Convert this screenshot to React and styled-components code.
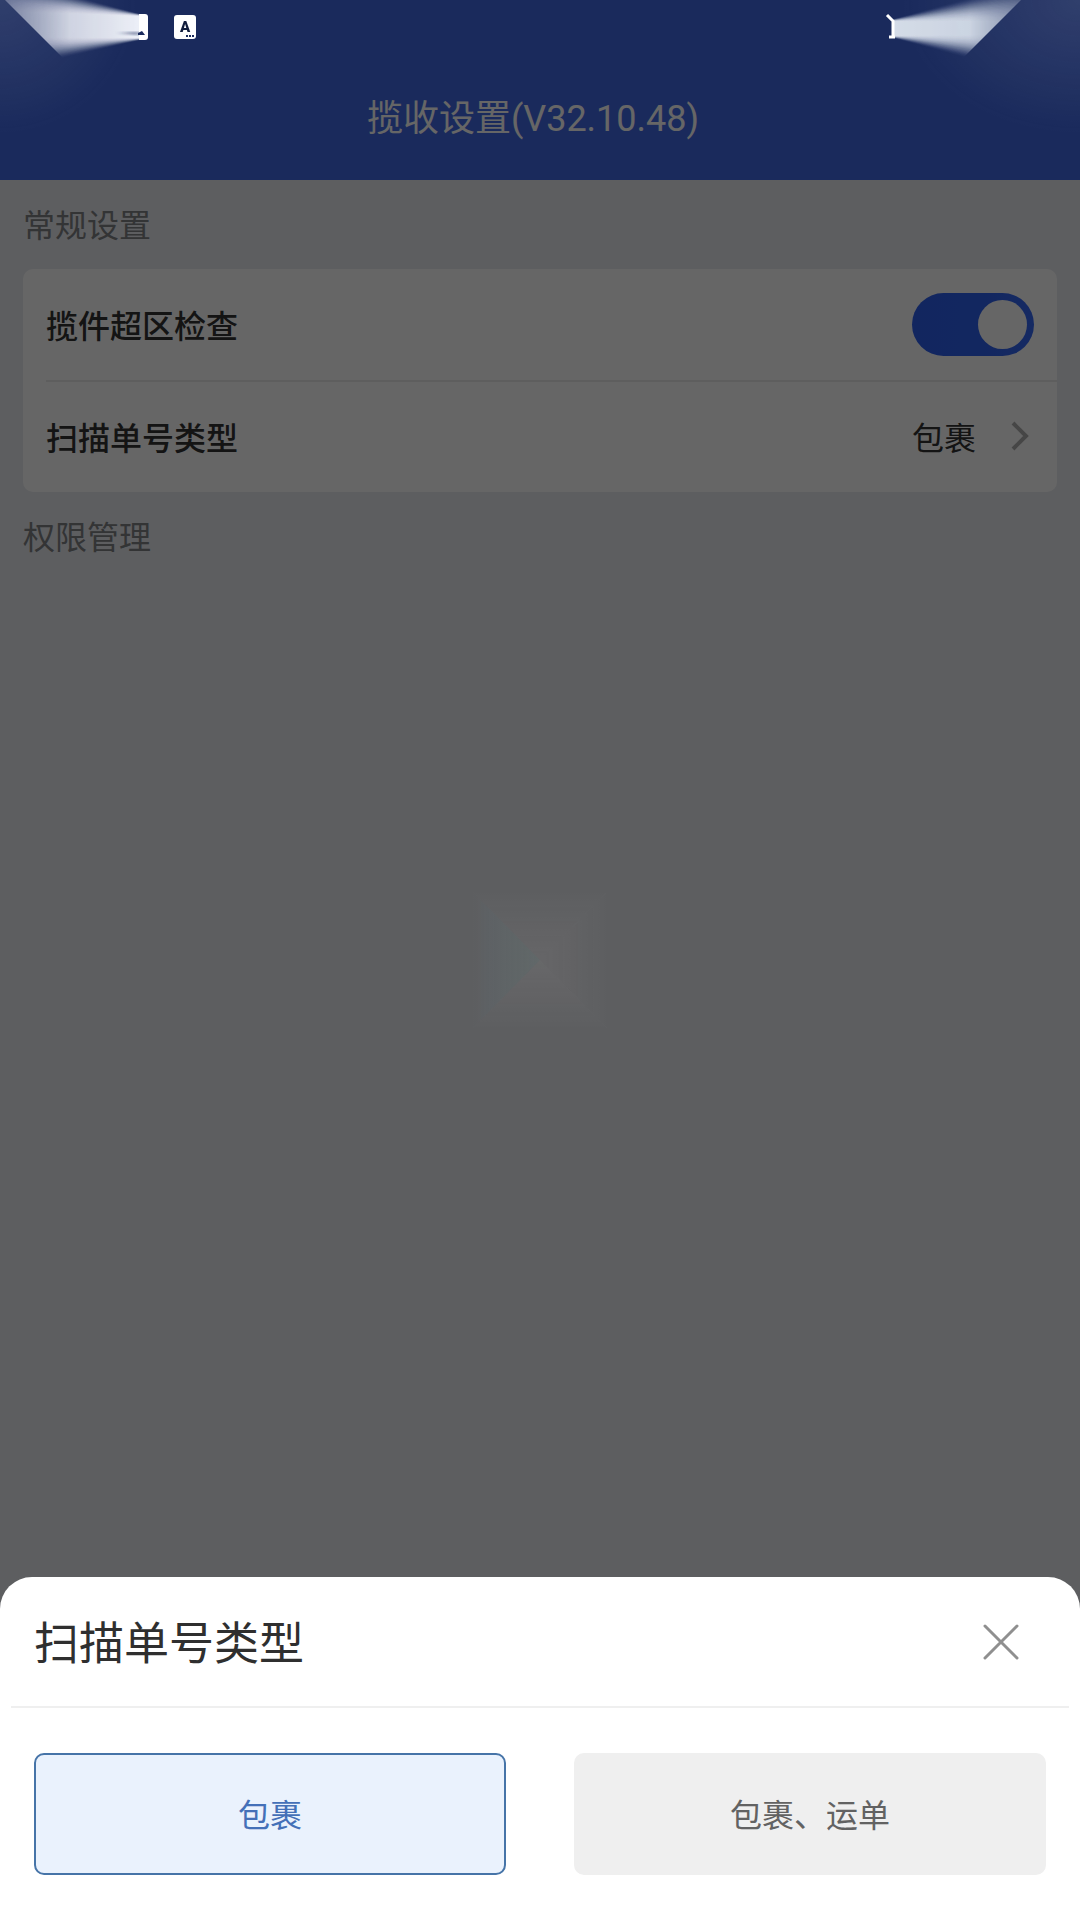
import React, { useState } from 'react'
import styled, { createGlobalStyle } from 'styled-components'

const GlobalStyle = createGlobalStyle`
  * {
    box-sizing: border-box;
  }
  body {
    margin: 0;
    background: #e9ebf0;
    font-family: Roboto, "Noto Sans CJK SC", sans-serif;
  }
  button, input {
    margin: 0;
    font-family: inherit;
  }
`

const Page = styled.div`
  min-height: 100vh;
`
const Header = styled.header`
  display: flex;
  justify-content: center;
  height: 180px;
  padding: 56px 14px 0 0;
  background: #4169e6;
`
const PageTitle = styled.h1`
  margin: 0;
  font-size: 36px;
  font-weight: 400;
  line-height: 126px;
  height: 124px;
  color: #fff;
`
const Settings = styled.main`
  padding: 0 23px;
`
const SectionTitle = styled.h2`
  margin: 0;
  height: 89px;
  font-size: 32px;
  font-weight: 400;
  line-height: 92px;
  color: #808285;
`
const Card = styled.section`
  padding-left: 23px;
  border-radius: 10px;
  background: #fff;
`
const SettingRow = styled.div`
  display: flex;
  align-items: center;
  justify-content: space-between;
  height: 111px;
  padding-right: 23px;

  & + & {
    height: 112px;
    border-top: 2px solid #ebebeb;
  }
`
const RowLabel = styled.label`
  padding-bottom: 2px;
  font-size: 32px;
  font-weight: 500;
  color: #333;
`
const RowValue = styled.button`
  display: flex;
  align-items: center;
  gap: 28px;
  padding: 0 0 2px;
  border: none;
  background: none;
  font-size: 32px;
  color: #333;
`
const Toggle = styled.input`
  appearance: none;
  display: flex;
  align-items: center;
  width: 122px;
  height: 63px;
  padding: 0 7px;
  border-radius: 32px;
  background: ${props => props.checked ? 'linear-gradient(90deg, #2d5fee, #2f62f0 60%, #3669f5)' : '#ccc'};
  justify-content: ${props => props.checked ? 'flex-end' : 'flex-start'};

  &::before {
    content: '';
    width: 49px;
    height: 49px;
    border-radius: 50%;
    background: #fff;
  }
`
const Backdrop = styled.div`
  position: fixed;
  inset: 0;
  display: grid;
  place-items: center;
  background: rgba(0, 0, 0, 0.6);
`
const StatusBar = styled.div`
  position: fixed;
  top: 0;
  left: 0;
  right: 0;
  display: flex;
  justify-content: space-between;
`
const Sheet = styled.section`
  position: fixed;
  left: 0;
  right: 0;
  bottom: 0;
  border-radius: 32px 32px 0 0;
  background: #fff;
`
const SheetHeader = styled.div`
  display: flex;
  align-items: center;
  justify-content: space-between;
  height: 131px;
  margin: 0 11px;
  padding: 0 50px 0 23px;
  border-bottom: 2px solid #efefef;
`
const SheetTitle = styled.h2`
  margin: 0;
  padding-bottom: 2px;
  font-size: 45px;
  font-weight: 400;
  color: #2f2f2f;
`
const CloseButton = styled.button`
  display: flex;
  padding: 0;
  border: none;
  background: none;
`
const Options = styled.div`
  display: grid;
  grid-template-columns: 1fr 1fr;
  gap: 68px;
  padding: 45px 34px;
`
const OptionButton = styled.button`
  height: 122px;
  padding: 0 0 2px;
  border: 2px solid ${props => props.$active ? '#4674a8' : '#efefef'};
  border-radius: 10px;
  background: ${props => props.$active ? '#eaf2fd' : '#efefef'};
  font-size: 32px;
  color: ${props => props.$active ? '#4470b8' : '#626262'};
`

const scanTypes = ['包裹', '包裹、运单']
const rays = Array.from({ length: 24 }, (_, i) => i)

function LeftStatus() {
  return (
    <svg width="220" height="140" viewBox="0 0 220 140" aria-hidden="true">
      <defs>
        <radialGradient id="leftTint" cx="0" cy="0" r="1">
          <stop offset="0" stopColor="#fff" stopOpacity="0.1" />
          <stop offset="1" stopColor="#fff" stopOpacity="0" />
        </radialGradient>
        <linearGradient id="leftFade" gradientUnits="userSpaceOnUse" x1="0" y1="0" x2="140" y2="0">
          <stop offset="0" stopColor="#fff" stopOpacity="0.35" />
          <stop offset="0.5" stopColor="#fff" stopOpacity="0.85" />
          <stop offset="1" stopColor="#fff" />
        </linearGradient>
        <mask id="leftMask">
          <path d="M5 0H141V62H67Z" fill="url(#leftFade)" />
        </mask>
        <filter id="soft">
          <feGaussianBlur stdDeviation="3 1" />
        </filter>
      </defs>
      <rect width="138" height="135" fill="url(#leftTint)" />
      <g mask="url(#leftMask)">
        {rays.map(i => (
          <path
            key={i}
            d={`M141 ${14 + i * 0.1}V${40 - i * 0.1}L0 ${72 - i * 1.5}V${-24 + i * 1.5}Z`}
            fill="#f8fafd"
            opacity={0.02 + i * 0.009}
          />
        ))}
      </g>
      <path d="M118 33L140 32V35Z" fill="#1a2a5c" opacity="0.6" filter="url(#soft)" />
      <path d="M139 14H145Q148 14 148 17V37Q148 40 145 40H139Z" fill="#fff" />
      <path d="M138 33L142 31L145 35H138Z" fill="#1a2a5c" />
      <rect x="174" y="15" width="22" height="24" rx="3" fill="#fff" />
      <text x="185" y="32" textAnchor="middle" fontSize="15" fontWeight="900" fill="#101c3c">A</text>
      <path d="M186 36h2m1 0h2m1 0h2" stroke="#1a2a5c" strokeWidth="2" />
    </svg>
  )
}

function RightStatus() {
  return (
    <svg width="200" height="140" viewBox="0 0 200 140" aria-hidden="true">
      <defs>
        <radialGradient id="rightTint" cx="1" cy="0" r="1">
          <stop offset="0" stopColor="#fff" stopOpacity="0.1" />
          <stop offset="1" stopColor="#fff" stopOpacity="0" />
        </radialGradient>
        <linearGradient id="rightFade" gradientUnits="userSpaceOnUse" x1="13" y1="0" x2="141" y2="0">
          <stop offset="0" stopColor="#fff" stopOpacity="0.95" />
          <stop offset="0.6" stopColor="#fff" stopOpacity="0.9" />
          <stop offset="1" stopColor="#fff" stopOpacity="0.5" />
        </linearGradient>
        <mask id="rightMask">
          <path d="M13 0H141L80 61H13Z" fill="url(#rightFade)" />
        </mask>
      </defs>
      <rect x="20" width="180" height="135" fill="url(#rightTint)" />
      <g mask="url(#rightMask)">
        {rays.map(i => (
          <path
            key={i}
            d={`M13 ${19 + i * 0.1}V${38 - i * 0.1}L141 ${72 - i * 1.6}V${-16 + i * 1.6}Z`}
            fill="#e9eff7"
            opacity={0.02 + i * 0.009}
          />
        ))}
      </g>
      <path d="M7 15L13 21V37M9 37H15" fill="none" stroke="#fff" strokeWidth="3" />
    </svg>
  )
}

// faint loading tile in the middle of the page, four sides fading outwards
function LoadingTile() {
  return (
    <svg width="134" height="136" viewBox="0 0 134 136" aria-hidden="true">
      <defs>
        <linearGradient id="tileTop" x1="0" y1="1" x2="0" y2="0">
          <stop offset="0" stopColor="#fff" stopOpacity="0.05" />
          <stop offset="1" stopColor="#fff" stopOpacity="0.005" />
        </linearGradient>
        <linearGradient id="tileBottom" x1="0" y1="0" x2="0" y2="1">
          <stop offset="0" stopColor="#fff" stopOpacity="0.06" />
          <stop offset="1" stopColor="#fff" stopOpacity="0.005" />
        </linearGradient>
        <linearGradient id="tileRight">
          <stop offset="0" stopColor="#fff" stopOpacity="0.05" />
          <stop offset="1" stopColor="#fff" stopOpacity="0.005" />
        </linearGradient>
        <linearGradient id="tileLeft">
          <stop offset="0" stopColor="#607880" stopOpacity="0" />
          <stop offset="0.3" stopColor="#607880" stopOpacity="0.16" />
          <stop offset="1" stopColor="#708884" stopOpacity="0.24" />
        </linearGradient>
      </defs>
      <path d="M0 0H134L67 68Z" fill="url(#tileTop)" />
      <path d="M0 136H134L67 68Z" fill="url(#tileBottom)" />
      <path d="M134 0V136L67 68Z" fill="url(#tileRight)" />
      <path d="M0 0L67 68L0 136Z" fill="url(#tileLeft)" />
    </svg>
  )
}

function App() {
  const [checkArea, setCheckArea] = useState(true)
  const [scanType, setScanType] = useState(scanTypes[0])
  const [open, setOpen] = useState(true)

  return (
    <Page>
      <GlobalStyle />
      <Header>
        <PageTitle>揽收设置(V32.10.48)</PageTitle>
      </Header>
      <Settings>
        <SectionTitle>常规设置</SectionTitle>
        <Card>
          <SettingRow>
            <RowLabel htmlFor="check-area">揽件超区检查</RowLabel>
            <Toggle
              id="check-area"
              type="checkbox"
              checked={checkArea}
              onChange={e => setCheckArea(e.target.checked)}
            />
          </SettingRow>
          <SettingRow>
            <RowLabel htmlFor="scan-type">扫描单号类型</RowLabel>
            <RowValue id="scan-type" type="button" onClick={() => setOpen(true)}>
              {scanType}
              <svg width="30" height="32" viewBox="0 0 30 32" aria-hidden="true">
                <path d="M9 3L22 16L9 29" fill="none" stroke="#b0b0b0" strokeWidth="4" />
              </svg>
            </RowValue>
          </SettingRow>
        </Card>
        <SectionTitle>权限管理</SectionTitle>
      </Settings>

      {open && (
        <>
          <Backdrop>
            <LoadingTile />
          </Backdrop>
          <Sheet role="dialog" aria-labelledby="sheet-title">
            <SheetHeader>
              <SheetTitle id="sheet-title">扫描单号类型</SheetTitle>
              <CloseButton type="button" aria-label="关闭" onClick={() => setOpen(false)}>
                <svg width="36" height="36" viewBox="0 0 36 36" aria-hidden="true">
                  <path d="M2 2L34 34M34 2L2 34" stroke="#8f8f8f" strokeWidth="3" strokeLinecap="round" />
                </svg>
              </CloseButton>
            </SheetHeader>
            <Options>
              {scanTypes.map(type => (
                <OptionButton
                  key={type}
                  type="button"
                  $active={type === scanType}
                  onClick={() => setScanType(type)}
                >
                  {type}
                </OptionButton>
              ))}
            </Options>
          </Sheet>
        </>
      )}
      <StatusBar>
        <LeftStatus />
        <RightStatus />
      </StatusBar>
    </Page>
  )
}

export default App
